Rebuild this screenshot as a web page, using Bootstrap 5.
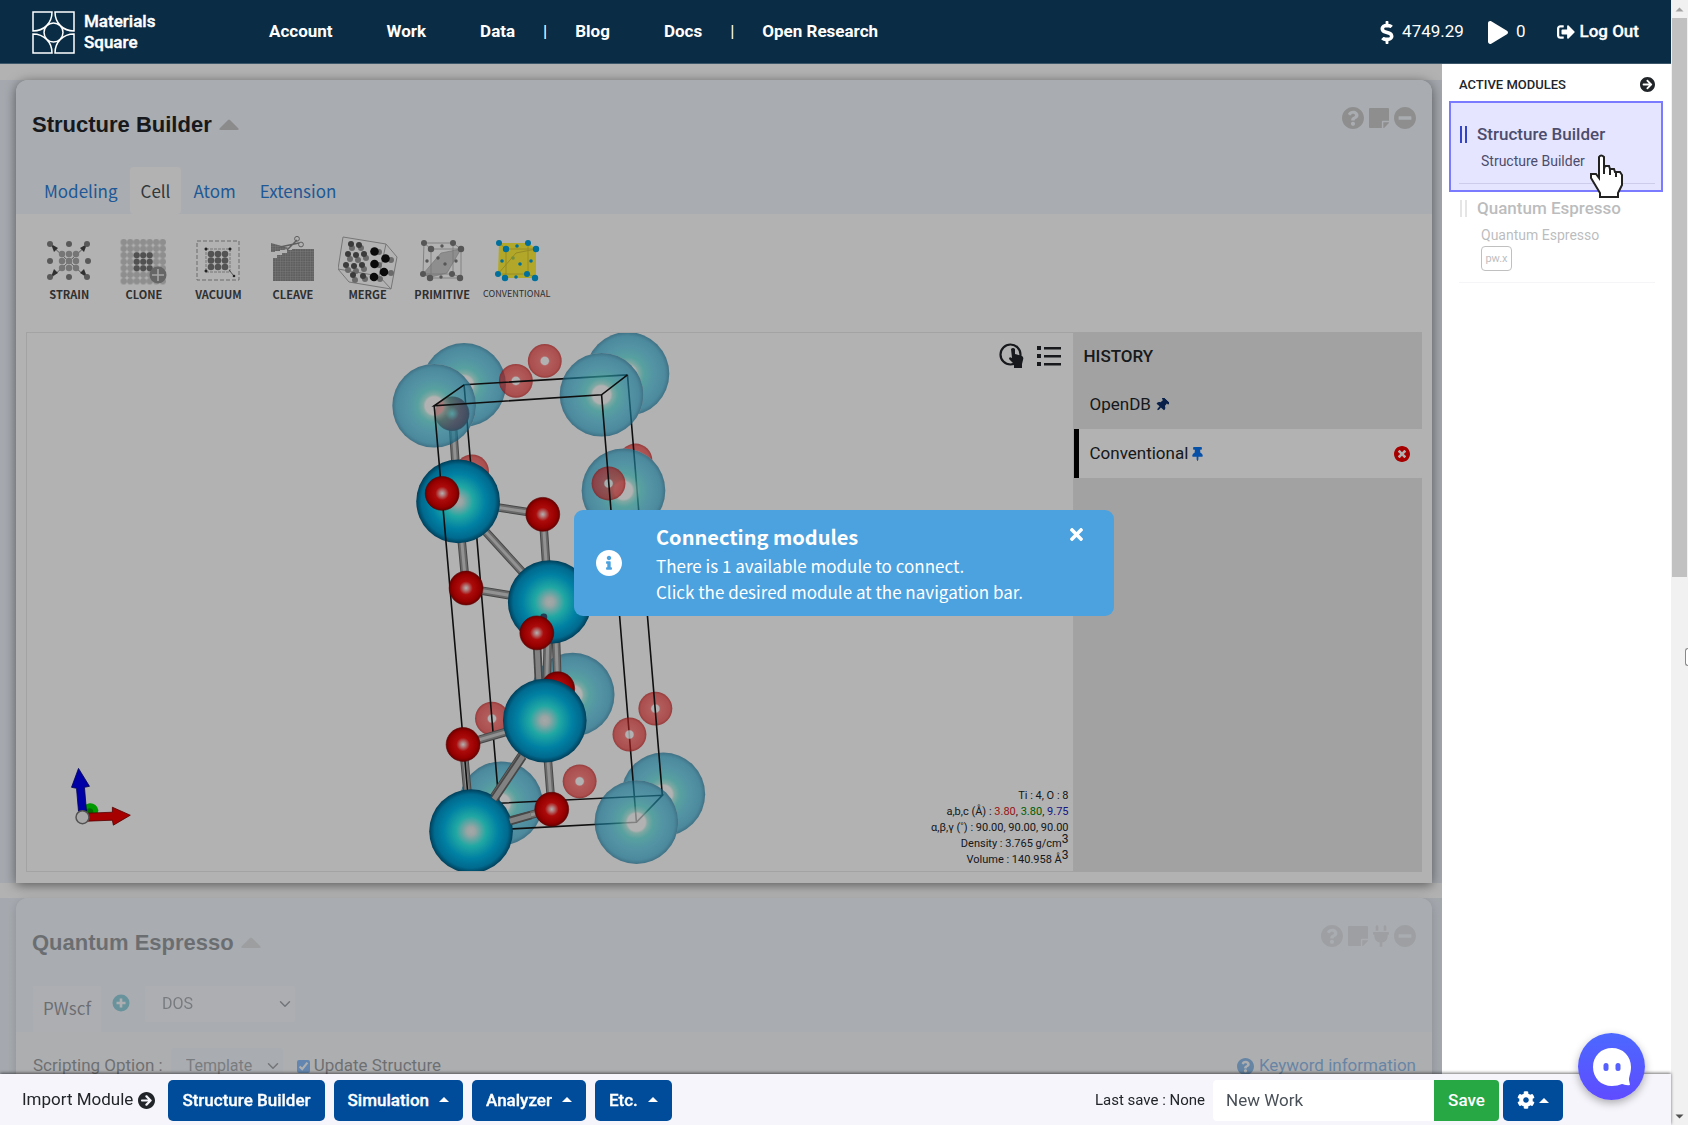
<!DOCTYPE html>
<html lang="en">
<head>
<meta charset="utf-8">
<meta name="viewport" content="width=device-width, initial-scale=1">
<title>Materials Square</title>
<link href="https://cdn.jsdelivr.net/npm/bootstrap@5.3.0/dist/css/bootstrap.min.css" rel="stylesheet">
<style>
  :root { --navy:#0a2c44; --action:#004c9b; --soft:#f3f7fd; --humanist:"Noto Sans CJK KR","Noto Sans",sans-serif; }
  body { font-family:Roboto,"Liberation Sans",sans-serif; font-size:17px; color:#212529; height:100vh; overflow:hidden; }
  svg { display:block; flex:none; }
  .ico { fill:currentColor; }
  .min-0 { min-width:0; min-height:0; }

  /* top bar */
  .topbar { background:var(--navy); color:#fff; height:64px; flex:none; border-bottom:1px solid #3c566a; padding:1px 32px 0; }
  .topbar a { color:#fff; text-decoration:none; }
  .brand { font-size:17px; line-height:21px; font-weight:500; -webkit-text-stroke:.4px #fff; width:210px; gap:9px; }
  .mainnav { font-weight:700; }
  .mainnav a { padding:0 27px; }
  .mainnav span { font-weight:400; padding:0 1px; }
  .logout { font-weight:500; -webkit-text-stroke:.3px #fff; gap:4px; }

  /* workspace */
  .workspace { overflow:hidden; padding-top:16px; background:#fff; }
  .shade { background:rgba(0,0,0,.3); z-index:5; pointer-events:none; }
  .band { background:linear-gradient(90deg,#edf3fb,#f3f7fc 50%,#e9eff7); padding:0 10px 0 16px; margin-bottom:15px; flex:none; }
  .modbox { border-radius:12px 12px 0 0; background:#fff; box-shadow:0 2px 12px rgba(0,0,0,.5); }
  .modbox.dim { box-shadow:0 2px 10px rgba(0,0,0,.15); background:#f8fafd; height:240px; }
  .modhead { background:var(--soft); border-radius:12px 12px 0 0; height:134px; padding-left:16px; }
  .modhead .toprow { padding-right:16px; }
  .modtitle { font-family:"Liberation Sans",Arial,sans-serif; font-size:22px; line-height:26px; font-weight:700; margin:32px 0 0; gap:7px; }
  .headtools { color:#ccc; gap:5px; margin-top:27px; }
  .headtools button, .plain { border:0; background:none; padding:0; color:inherit; }
  .dim .modhead > *, .dim .optrow { opacity:.42; }
  .tabstrip { font-family:var(--humanist); font-size:17px; margin:0; }
  .tabstrip .nav-link { padding:0 12px; height:47px; line-height:47px; border:0; border-radius:4px; color:#2d7fd9; }
  .tabstrip .nav-link.active { background:#fff; color:#495057; padding:0 11px; }

  .tools { display:grid; grid-template-columns:repeat(7,minmax(0,1fr)); width:522px; max-width:100%; margin-left:16px; padding-top:22px; height:118px; align-items:start; }
  .tools button { border:0; background:none; padding:0; font:700 11px/14px var(--humanist); color:#444; }
  .tools button svg { margin:0 auto -3px; }
  .tools button.slim { font-weight:400; font-size:9px; }
  .stage { padding:0 10px 11px; height:551px; }
  .viewer { flex:3 1 0; border:1px solid #eaeaea; background:#fff; position:relative; }
  .history { flex:1 1 0; background:#e9e9e9; }
  .viewtools { position:absolute; top:10px; right:12px; gap:13px; }
  .cellinfo { position:absolute; right:4px; bottom:3px; font-size:11px; line-height:16px; text-align:right; }
  .cellinfo sup { font-size:12px; line-height:0; top:-4px; }
  .history h2 { font-size:17px; font-weight:500; line-height:48px; margin:0; padding-left:10px; }
  .step { height:49px; padding:0 12px 0 16px; gap:4px; }
  .step.now { background:#fff; border-left:5px solid #000; padding-left:11px; }

  .scftab { font-family:var(--humanist); font-size:17px; background:#fff; width:68px; height:46px; text-align:center; line-height:44px; margin-left:1px; }
  .adder { margin:8px 15px 0 11px; }
  .picker { border:0; border-radius:3px; background-color:#fff; font-size:16px; padding:0 28px 0 17px; height:36px; width:150px; background-position:right 2px center; color:#495057; }
  .optrow { padding:16px 16px 0 17px; }
  .optrow .picker { background-color:#eef4fb; width:112px; font-size:16px; padding-left:15px; }
  .optrow input[type=checkbox] { width:13px; height:13px; margin:0 4px 0 14px; }
  .keyinfo { color:#0a6fd8; text-decoration:none; gap:5px; }

  /* module list */
  .modlist { width:229px; background:#fff; padding:0 8px 0 7px; z-index:6; }
  .modlist h2 { font-size:13px; line-height:33px; font-weight:500; margin:0; padding:4px 8px 0 10px; }
  .entry { display:block; border:2px solid transparent; color:#212529; text-decoration:none; height:91px; padding:19px 6px 0 8px; }
  .entry.on { border-color:#7b7bff; background:#e5e5ff; color:#4c4c6c; }
  .entry.off { opacity:.3; padding-top:2px; height:94px; }
  .entry .name { font-size:17px; line-height:24px; font-weight:500; gap:10px; }
  .entry .sub { font-size:14px; line-height:22px; padding:4px 0 0 22px; }
  .bars { width:7px; height:17px; border:solid #3344c4; border-width:0 2px; margin-left:1px; }
  .off .bars { border-color:#aaa; }
  .entry hr { margin:11px 0 0; border-color:#8888b0; }
  .chip { display:block; width:31px; text-align:center; border:1px solid #333; border-radius:4px; font-size:11px; line-height:23px; margin-left:22px; }
  .pointer { position:absolute; left:147px; top:90px; z-index:8; }

  /* bottom bar */
  .bottombar { background:#f5f5fb; height:51px; flex:none; padding:1px 108px 0 22px; box-shadow:0 -1px 3px rgba(0,0,0,.55); z-index:7; position:relative; }
  .bottombar .btn { height:41px; font-size:17px; line-height:26px; padding:6px 14px; border-radius:5px; border:0; }
  .btn-act { background:var(--action); color:#fff; font-weight:500; -webkit-text-stroke:.3px #fff; }
  .btn-act:hover { background:#003f80; color:#fff; }
  .btn-act.dropdown-toggle::after { margin-left:10px; }
  .importer { gap:5px; margin-right:13px; }
  .launch { gap:9px; }
  .bottombar .btn-gear { width:60px; }
  .btn-gear.dropdown-toggle::after { margin-left:4px; }
  .bottombar .btn-save { background:#28a745; color:#fff; border-radius:0 4px 4px 0; width:65px; font-weight:500; }
  .bottombar input { width:221px; height:41px; border:0; border-radius:4px 0 0 4px; font-size:17px; padding:0 13px; color:#495057; }
  .savebox { font-size:15px; }
  .chat { position:absolute; right:26px; top:-41px; width:67px; height:67px; border-radius:50%; border:0; padding:0; background:linear-gradient(#4c68ff,#5f4cff); box-shadow:0 3px 8px rgba(0,0,0,.3); }
  .chat svg { margin:auto; }

  /* message */
  .message { position:fixed; left:50%; top:50%; transform:translate(-50%,-50%); z-index:20; width:540px; height:106px; background:#4ca2de; color:#fff; border-radius:9px; font:17px/26px var(--humanist); padding:0 31px 0 22px; }
  .message strong { font-size:20px; display:block; line-height:30px; margin-bottom:1px; }
  .message .copy { margin-left:34px; margin-top:12px; }
  .message button { margin-top:18px; }

  /* scroll rail */
  .rail { width:17px; background:#f1f1f1; }
  .rail .thumb { width:15px; background:#c1c1c1; flex:0 0 559px; }
  .rail .grip { position:fixed; right:0; top:648px; width:3px; height:18px; border:1px solid #888; border-right:0; background:#fff; border-radius:3px 0 0 3px; }
</style>
<script src="https://cdn.jsdelivr.net/npm/bootstrap@5.3.0/dist/js/bootstrap.bundle.min.js"></script>
</head>
<body class="d-flex">

<svg width="0" height="0" class="position-absolute" aria-hidden="true">
  <defs>
    <symbol id="i-help" viewBox="8 8 496 496"><path d="M504 256c0 136.997-111.043 248-248 248S8 392.997 8 256C8 119.083 119.043 8 256 8s248 111.083 248 248zM262.655 90c-54.497 0-89.255 22.957-116.549 63.758-3.536 5.286-2.353 12.415 2.715 16.258l34.699 26.310c5.205 3.947 12.621 3.008 16.665-2.122 17.864-22.658 30.113-35.797 57.303-35.797 20.429 0 45.698 13.148 45.698 32.958 0 14.976-12.363 22.667-32.534 33.976C247.128 238.528 216 254.941 216 296v4c0 6.627 5.373 12 12 12h56c6.627 0 12-5.373 12-12v-1.333c0-28.462 83.186-29.647 83.186-106.667 0-58.002-60.165-102-116.531-102zM256 338c-25.365 0-46 20.635-46 46 0 25.364 20.635 46 46 46s46-20.636 46-46c0-25.365-20.635-46-46-46z"/></symbol>
    <symbol id="i-note" viewBox="0 32 448 448"><path d="M312 320h136V56c0-13.300-10.700-24-24-24H24C10.700 32 0 42.700 0 56v400c0 13.300 10.700 24 24 24h264V344c0-13.200 10.800-24 24-24zm129 55l-98 98c-4.500 4.500-10.600 7-17 7h-6V352h128v6.100c0 6.300-2.500 12.400-7 16.900z"/></symbol>
    <symbol id="i-minus" viewBox="8 8 496 496"><path d="M256 8C119 8 8 119 8 256s111 248 248 248 248-111 248-248S393 8 256 8zM124 296c-6.600 0-12-5.400-12-12v-56c0-6.600 5.400-12 12-12h264c6.600 0 12 5.400 12 12v56c0 6.600-5.400 12-12 12H124z"/></symbol>
    <symbol id="i-plug" viewBox="0 0 384 512"><path d="M320,32a32,32,0,0,0-64,0v96h64Zm48,128H16A16,16,0,0,0,0,176v32a16,16,0,0,0,16,16H32v32A160.070,160.070,0,0,0,160,412.800V512h64V412.800A160.070,160.070,0,0,0,352,256V224h16a16,16,0,0,0,16-16V176A16,16,0,0,0,368,160ZM128,32a32,32,0,0,0-64,0v96h64Z"/></symbol>
    <symbol id="i-info" viewBox="8 8 496 496"><path d="M256 8C119.043 8 8 119.083 8 256c0 136.997 111.043 248 248 248s248-111.003 248-248C504 119.083 392.957 8 256 8zm0 110c23.196 0 42 18.804 42 42s-18.804 42-42 42-42-18.804-42-42 18.804-42 42-42zm56 254c0 6.627-5.373 12-12 12h-88c-6.627 0-12-5.373-12-12v-24c0-6.627 5.373-12 12-12h12v-64h-12c-6.627 0-12-5.373-12-12v-24c0-6.627 5.373-12 12-12h64c6.627 0 12 5.373 12 12v100h12c6.627 0 12 5.373 12 12v24z"/></symbol>
    <symbol id="i-go" viewBox="8 8 496 496"><path d="M256 8c137 0 248 111 248 248S393 504 256 504 8 393 8 256 119 8 256 8zm-28.900 143.600l75.500 72.400H120c-13.300 0-24 10.700-24 24v16c0 13.300 10.700 24 24 24h182.600l-75.500 72.400c-9.700 9.300-9.900 24.800-.4 34.300l11 10.900c9.400 9.400 24.600 9.400 33.900 0L404.300 273c9.400-9.400 9.400-24.600 0-33.900L271.600 106.300c-9.400-9.400-24.600-9.400-33.900 0l-11 10.900c-9.500 9.600-9.300 25.100.4 34.400z"/></symbol>
    <symbol id="i-xcircle" viewBox="8 8 496 496"><path d="M256 8C119 8 8 119 8 256s111 248 248 248 248-111 248-248S393 8 256 8zm121.600 313.100c4.700 4.700 4.700 12.300 0 17L338 377.600c-4.700 4.700-12.300 4.700-17 0L256 312l-65.100 65.600c-4.700 4.700-12.300 4.700-17 0L134.400 338c-4.700-4.700-4.700-12.300 0-17l65.600-65-65.600-65.100c-4.700-4.700-4.700-12.300 0-17l39.600-39.600c4.700-4.700 12.300-4.700 17 0l65 65.700 65.100-65.600c4.700-4.700 12.300-4.700 17 0l39.600 39.600c4.700 4.700 4.700 12.300 0 17L312 256l65.600 65.100z"/></symbol>
    <symbol id="i-pin" viewBox="0 0 384 512"><path d="M298.028 214.267L285.793 96H328c13.255 0 24-10.745 24-24V24c0-13.255-10.745-24-24-24H56C42.745 0 32 10.745 32 24v48c0 13.255 10.745 24 24 24h42.207L85.972 214.267C37.465 236.820 0 277.261 0 328c0 13.255 10.745 24 24 24h136v104.007c0 1.242.289 2.467.845 3.578l24 48c2.941 5.882 11.364 5.893 14.311 0l24-48a8.008 8.008 0 0 0 .845-3.578V352h136c13.255 0 24-10.745 24-24-.001-51.183-37.983-91.420-85.973-113.733z"/></symbol>
    <symbol id="i-x" viewBox="0 80 352 352"><path d="M242.720 256l100.070-100.070c12.280-12.280 12.280-32.190 0-44.480l-22.240-22.240c-12.280-12.280-32.190-12.280-44.480 0L176 189.280 75.930 89.210c-12.280-12.280-32.190-12.280-44.480 0L9.210 111.450c-12.280 12.280-12.280 32.190 0 44.480L109.280 256 9.210 356.070c-12.280 12.280-12.280 32.190 0 44.480l22.240 22.240c12.280 12.280 32.200 12.280 44.480 0L176 322.720l100.070 100.070c12.280 12.280 32.200 12.280 44.480 0l22.240-22.240c12.280-12.280 12.280-32.190 0-44.480L242.720 256z"/></symbol>

    <radialGradient id="ti"><stop offset="0" stop-color="#ecf0f0"/><stop offset=".1" stop-color="#dcebea"/><stop offset=".36" stop-color="#2ef0ea"/><stop offset=".66" stop-color="#00b8ea"/><stop offset=".88" stop-color="#0098cc"/><stop offset="1" stop-color="#005a80"/></radialGradient>
    <radialGradient id="ox"><stop offset="0" stop-color="#fff"/><stop offset=".15" stop-color="#ffaaaa"/><stop offset=".4" stop-color="#f61010"/><stop offset=".8" stop-color="#d80000"/><stop offset="1" stop-color="#900"/></radialGradient>
    <radialGradient id="tif"><stop offset="0" stop-color="#fff" stop-opacity=".7"/><stop offset=".21" stop-color="#fff" stop-opacity=".7"/><stop offset=".26" stop-color="#a9efe4" stop-opacity=".8"/><stop offset=".4" stop-color="#45dcda" stop-opacity=".7"/><stop offset=".65" stop-color="#2cbbe0" stop-opacity=".64"/><stop offset=".9" stop-color="#22a6d2" stop-opacity=".66"/><stop offset="1" stop-color="#1c7ea4" stop-opacity=".72"/></radialGradient>
    <radialGradient id="oxf"><stop offset="0" stop-color="#fff" stop-opacity=".85"/><stop offset=".22" stop-color="#fff" stop-opacity=".85"/><stop offset=".3" stop-color="#f33" stop-opacity=".6"/><stop offset=".85" stop-color="#f02828" stop-opacity=".66"/><stop offset="1" stop-color="#c81e1e" stop-opacity=".75"/></radialGradient>
    <g id="Ti"><circle r="42" fill="url(#ti)"/></g>
    <g id="Ox"><circle r="17" fill="url(#ox)" stroke="#800" stroke-width=".6"/></g>
    <g id="Tif"><circle r="42" fill="url(#tif)"/></g>
    <g id="Oxf"><circle r="17" fill="url(#oxf)"/></g>
    <pattern id="dots" width="6.5" height="6.500" patternUnits="userSpaceOnUse" x="4.500" y="3"><circle cx="3.250" cy="3.250" r="3.200" fill="#ccc"/></pattern>
    <pattern id="mesh" width="2.500" height="2.500" patternUnits="userSpaceOnUse"><rect width="2.500" height="2.500" fill="#888"/><path d="M0 0H2.500M0 0V2.500" stroke="#b4b4b4" stroke-width=".8"/></pattern>
  </defs>
</svg>

<div class="d-flex flex-column flex-grow-1 min-0">

  <header class="topbar d-flex align-items-center">
    <a href="#" class="brand d-flex align-items-center">
      <svg width="43" height="43" viewBox="0 0 43 43" fill="none" stroke="#fff" stroke-width="1.500">
        <path d="M1 1h19c0 11-8 19-19 19zM42 1H23c0 11 8 19 19 19zM1 42h19c0-11-8-19-19-19zM42 42H23c0-11 8-19 19-19z"/>
        <circle cx="21.500" cy="21.500" r="9.500"/>
      </svg>
      <span>Materials<br>Square</span>
    </a>
    <nav class="mainnav d-flex align-items-center">
      <a href="#">Account</a><a href="#">Work</a><a href="#">Data</a><span>|</span><a href="#">Blog</a><a href="#">Docs</a><span>|</span><a href="#">Open Research</a>
    </nav>
    <div class="d-flex align-items-center ms-auto">
      <svg class="ico me-2" width="14" height="23" viewBox="0 0 288 512"><path d="M209.200 233.400l-108-31.600C88.700 198.200 80 186.500 80 173.500c0-16.300 13.200-29.500 29.500-29.500h66.300c12.200 0 24.200 3.700 34.200 10.500 6.100 4.100 14.300 3.100 19.500-2l34.800-34c7.100-6.900 6.100-18.400-1.800-24.500C238 74.800 207.400 64.100 176 64V16c0-8.800-7.200-16-16-16h-32c-8.800 0-16 7.200-16 16v48h-2.500C45.800 64-5.400 118.700.5 183.600c4.200 46.100 39.400 83.600 83.800 96.600l102.500 30c12.500 3.700 21.200 15.300 21.200 28.300 0 16.300-13.200 29.500-29.500 29.500h-66.300C100 368 88 364.300 78 357.500c-6.100-4.100-14.300-3.100-19.500 2l-34.800 34c-7.100 6.900-6.100 18.400 1.800 24.500 24.500 19.200 55.100 29.900 86.500 30v48c0 8.800 7.200 16 16 16h32c8.800 0 16-7.200 16-16v-48.200c46.600-.9 90.300-28.600 105.700-72.700 21.500-61.600-14.600-124.800-72.500-141.700z"/></svg>
      <span class="me-4">4749.29</span>
      <svg class="ico me-2" width="20" height="23" viewBox="0 0 448 512"><path d="M424.400 214.700L72.400 6.600C43.800-10.300 0 6.100 0 47.900V464c0 37.500 40.700 60.100 72.400 41.300l352-208c31.400-18.500 31.500-64.100 0-82.600z"/></svg>
      <span>0</span>
      <a href="#" class="logout d-flex align-items-center ms-4 ps-2">
        <svg class="ico" width="18" height="18" viewBox="0 0 512 512"><path d="M497 273L329 441c-15 15-41 4.500-41-17v-96H152c-13.300 0-24-10.700-24-24v-96c0-13.300 10.700-24 24-24h136V88c0-21.400 25.900-32 41-17l168 168c9.300 9.400 9.300 24.600 0 34zM192 436v-40c0-6.600-5.400-12-12-12H96c-17.700 0-32-14.300-32-32V160c0-17.700 14.300-32 32-32h84c6.600 0 12-5.400 12-12V76c0-6.600-5.400-12-12-12H96c-53 0-96 43-96 96v192c0 53 43 96 96 96h84c6.600 0 12-5.400 12-12z"/></svg>
        Log Out</a>
    </div>
  </header>

  <div class="d-flex flex-grow-1 min-0 position-relative">
    <main class="workspace flex-grow-1 min-0 position-relative d-flex flex-column">
      <div class="shade position-absolute top-0 bottom-0 start-0 end-0"></div>

      <div class="band">
        <section class="modbox">
          <div class="modhead d-flex flex-column justify-content-between">
            <div class="toprow d-flex justify-content-between align-items-start">
              <h1 class="modtitle d-flex align-items-center">Structure Builder
                <svg width="20" height="12" viewBox="0 0 20 12"><path d="M9 1q1-1 2 0l8 8q2 2-1 2H2q-3 0-1-2z" fill="#c8c8c8"/></svg></h1>
              <div class="headtools d-flex">
                <button type="button" aria-label="Help"><svg class="ico" width="22" height="22"><use href="#i-help"/></svg></button>
                <button type="button" aria-label="Note"><svg class="ico" width="20" height="20"><use href="#i-note"/></svg></button>
                <button type="button" aria-label="Minimize"><svg class="ico" width="22" height="22"><use href="#i-minus"/></svg></button>
              </div>
            </div>
            <ul class="nav tabstrip">
              <li class="nav-item"><a class="nav-link" href="#">Modeling</a></li>
              <li class="nav-item"><a class="nav-link active" href="#">Cell</a></li>
              <li class="nav-item"><a class="nav-link" href="#">Atom</a></li>
              <li class="nav-item"><a class="nav-link" href="#">Extension</a></li>
            </ul>
          </div>

          <div class="tools">
            <button type="button"><svg width="56" height="54" viewBox="0 0 56 54">
              <path d="M10 9l36 33M46 9L10 42" stroke="#666" stroke-width=".8"/>
              <path d="M10 8l7 4-4 4zM46 8l-7 4 4 4zM10 41l7-4-4-4zM46 41l-7-4 4-4z" fill="#444"/>
              <g fill="#808080"><circle cx="9" cy="8" r="3"/><circle cx="28" cy="8" r="3"/><circle cx="46" cy="8" r="3"/><circle cx="9" cy="25" r="3"/><circle cx="47" cy="25" r="3"/><circle cx="9" cy="41" r="3"/><circle cx="28" cy="41" r="3"/><circle cx="46" cy="41" r="3"/></g>
              <g fill="#aaa"><circle cx="21" cy="18" r="3.200"/><circle cx="28" cy="18" r="3.200"/><circle cx="35" cy="18" r="3.200"/><circle cx="21" cy="25" r="3.200"/><circle cx="28" cy="25" r="3.200"/><circle cx="35" cy="25" r="3.200"/><circle cx="21" cy="32" r="3.200"/><circle cx="28" cy="32" r="3.200"/><circle cx="35" cy="32" r="3.200"/></g>
            </svg>STRAIN</button>
            <button type="button"><svg width="56" height="54" viewBox="0 0 56 54">
              <rect x="4.500" y="3" width="45.500" height="45.500" fill="url(#dots)"/>
              <g fill="#757575"><circle cx="20.700" cy="19.200" r="3"/><circle cx="27.200" cy="19.200" r="3"/><circle cx="33.700" cy="19.200" r="3"/><circle cx="20.700" cy="25.700" r="3"/><circle cx="27.200" cy="25.700" r="3"/><circle cx="33.700" cy="25.700" r="3"/><circle cx="20.700" cy="32.200" r="3"/><circle cx="27.200" cy="32.200" r="3"/><circle cx="33.700" cy="32.200" r="3"/></g>
              <circle cx="42" cy="39" r="8.500" fill="#929292"/><path d="M42 33v12M36 39h12" stroke="#eee" stroke-width="1.600"/>
            </svg>CLONE</button>
            <button type="button"><svg width="56" height="54" viewBox="0 0 56 54">
              <rect x="7" y="5" width="42" height="39" fill="none" stroke="#999" stroke-dasharray="4 2"/>
              <rect x="16" y="13" width="24" height="23" fill="none" stroke="#888" stroke-width=".7" stroke-dasharray="3 1"/>
              <g fill="#787878"><circle cx="21" cy="18" r="3.300"/><circle cx="28" cy="18" r="3.300"/><circle cx="35" cy="18" r="3.300"/><circle cx="21" cy="24.500" r="3.300"/><circle cx="28" cy="24.500" r="3.300"/><circle cx="35" cy="24.500" r="3.300"/><circle cx="21" cy="31" r="3.300"/><circle cx="28" cy="31" r="3.300"/><circle cx="35" cy="31" r="3.300"/></g>
              <path d="M15 12h2v2h-2zM39 12h2v2h-2zM15 34h2v2h-2zM39 34l5 6" fill="#333" stroke="#333" stroke-width=".7"/><circle cx="44" cy="40" r="1.300" fill="#333"/>
            </svg>VACUUM</button>
            <button type="button"><svg width="56" height="54" viewBox="0 0 56 54">
              <path d="M8 45V22h4v-3h5v-2h5v-3h5v-1h22v32z" fill="url(#mesh)"/>
              <path d="M6 7l18 5-5 2h-4v1h-5v1H6z" fill="url(#mesh)"/>
              <path d="M22 14L32 4M15 11l19-4" stroke="#888" stroke-width="1.500"/><circle cx="32" cy="2.800" r="2.400" fill="none" stroke="#888"/><circle cx="36" cy="8.500" r="2.400" fill="none" stroke="#888"/>
            </svg>CLEAVE</button>
            <button type="button"><svg width="60" height="54" viewBox="-1 0 60 54">
              <path d="M4 1l43 7 11 13-6 32-42-7L-1 33zM47 8L40 40 52 53M40 40L-1 33" fill="none" stroke="#aaa"/>
              <g fill="#999"><circle cx="13" cy="12" r="3"/><circle cx="22" cy="12" r="3"/><circle cx="11" cy="23" r="3"/><circle cx="19" cy="24" r="3"/><circle cx="27" cy="22" r="3"/><circle cx="9" cy="34" r="3"/><circle cx="17" cy="35" r="3"/><circle cx="25" cy="33" r="3"/><circle cx="16" cy="44" r="3"/><circle cx="26" cy="43" r="3"/><circle cx="40" cy="16" r="3"/><circle cx="40" cy="29" r="3"/><circle cx="41" cy="43" r="3"/><circle cx="52" cy="24" r="3"/><circle cx="52" cy="37" r="3"/></g>
              <g fill="#555"><circle cx="12" cy="8" r="3"/><circle cx="20" cy="9" r="3"/><circle cx="9" cy="18" r="3"/><circle cx="17" cy="19" r="3"/><circle cx="25" cy="18" r="3"/><circle cx="7" cy="29" r="3"/><circle cx="15" cy="30" r="3"/><circle cx="23" cy="29" r="3"/><circle cx="14" cy="39" r="3"/><circle cx="24" cy="40" r="3"/></g>
              <g fill="#111"><circle cx="35.500" cy="15.500" r="4.300"/><circle cx="35.500" cy="28" r="4.300"/><circle cx="35" cy="41" r="4.300"/><circle cx="46.500" cy="22.500" r="4.300"/><circle cx="45" cy="36" r="4.300"/></g>
            </svg>MERGE</button>
            <button type="button"><svg width="56" height="54" viewBox="0 0 56 54">
              <path d="M10 7h29l8 6v29H17l-8-4zM10 7l7 6h30M17 13v29M39 7v31M9 38h30l8 4" fill="none" stroke="#bbb"/>
              <path d="M9 38L27 17l20-4-14 24-16 4z" fill="#aaa" fill-opacity=".6" stroke="#999" stroke-width=".5"/>
              <g fill="#7b7b7b"><circle cx="10" cy="7" r="3"/><circle cx="39" cy="7" r="3"/><circle cx="17" cy="13" r="3.200"/><circle cx="47" cy="13" r="3.200"/><circle cx="9" cy="38" r="3"/><circle cx="38" cy="38" r="3"/><circle cx="16" cy="42" r="3.200"/><circle cx="46" cy="42" r="3.200"/><circle cx="28" cy="10" r="1.700"/><circle cx="13" cy="25" r="1.700"/><circle cx="24" cy="22" r="1.700"/><circle cx="31" cy="28" r="1.700"/><circle cx="42" cy="25" r="1.700"/><circle cx="27" cy="41" r="1.700"/></g>
            </svg>PRIMITIVE</button>
            <button type="button" class="slim"><svg width="56" height="54" viewBox="0 0 56 54">
              <path d="M10 7h29l8 6v29H17l-8-4z" fill="#ffef3c"/>
              <path d="M10 7l7 6h30M17 13v29M39 7v31M9 38h30l8 4M9 38L27 17l20-4" fill="none" stroke="#d8c734"/>
              <g fill="#00a0e0"><circle cx="10" cy="7" r="3"/><circle cx="39" cy="7" r="3"/><circle cx="17" cy="13" r="3.200"/><circle cx="47" cy="13" r="3.200"/><circle cx="9" cy="38" r="3"/><circle cx="38" cy="38" r="3"/><circle cx="16" cy="42" r="3.200"/><circle cx="46" cy="42" r="3.200"/><circle cx="28" cy="10" r="1.800"/><circle cx="13" cy="25" r="1.800"/><circle cx="24" cy="22" r="1.800" fill="#a5cc55"/><circle cx="31" cy="28" r="1.800"/><circle cx="42" cy="25" r="1.800"/><circle cx="27" cy="41" r="1.800"/></g>
            </svg>CONVENTIONAL</button>
          </div>

          <div class="stage d-flex">
            <div class="viewer">
              <svg width="100%" height="100%" viewBox="27 332 1046 540">
                <g>
                  <use href="#Tif" x="464" y="384"/><use href="#Tif" x="628" y="373"/>
                  <use href="#Oxf" x="516" y="380"/><use href="#Oxf" x="545" y="360"/>
                  <use href="#Oxf" x="472" y="471"/><use href="#Oxf" x="636" y="460"/>
                  <use href="#Tif" x="573" y="695"/><use href="#Tif" x="501" y="804"/><use href="#Tif" x="664" y="795"/>
                  <use href="#Oxf" x="492" y="719"/><use href="#Oxf" x="656" y="709"/><use href="#Oxf" x="580" y="782"/>
                </g>
                <!-- front ghosts hide the ghosts behind them, but not the cell edges -->
                <g fill="#fff"><circle cx="434" cy="405" r="42"/><circle cx="602" cy="394" r="42"/><circle cx="624" cy="490" r="42"/><circle cx="637" cy="823" r="42"/></g>
                <path d="M464 384L628 374M464 384L499 804M628 374L663 796M499 804L663 796 637 823 471 832" fill="none" stroke="#161616" stroke-width="1.600"/>
                <g stroke="#666" stroke-width="8.500"><path id="bonds" d="M452 413L458 501M458 501L543 514M458 501L550 602M458 501L466 588M466 588L550 602M543 514L549 602M555 602L558 689M549 602L546 721M545 721L463 745M545 721L552 810M545 721L471 832M463 745L471 832M471 832L552 810"/></g>
                <use href="#bonds" stroke="#999" stroke-width="6.500"/><use href="#bonds" stroke="#d2d2d2" stroke-width="3"/>
                <use href="#Ox" x="452" y="413"/>
                <use href="#Tif" x="434" y="405"/><use href="#Tif" x="602" y="394"/><use href="#Tif" x="624" y="490"/>
                <path d="M464 384L434 405 602 394 628 374" fill="none" stroke="#161616" stroke-width="1.600"/>
                <use href="#Oxf" x="609" y="483"/>
                <use href="#Ti" x="458" y="501"/>
                <use href="#Ox" x="558" y="689"/>
                <path d="M434 405L471 832M602 394L637 823" stroke="#161616" stroke-width="1.600"/>
                <use href="#Ti" x="550" y="602"/>
                <use href="#Ox" x="442" y="493"/><use href="#Ox" x="543" y="514"/><use href="#Ox" x="466" y="588"/>
                <path d="M537 640L541 721" stroke="#666" stroke-width="8.500"/><path d="M537 640L541 721" stroke="#bbb" stroke-width="5"/>
                <circle cx="544" cy="617" r="3.500" fill="#357"/>
                <use href="#Ox" x="537" y="633"/>
                <use href="#Ti" x="545" y="721"/>
                <use href="#Oxf" x="630" y="735"/><use href="#Tif" x="637" y="823"/>
                <use href="#Ti" x="471" y="832"/>
                <path d="M523 757L494 800M531 816L510 822" stroke="#666" stroke-width="8.500"/><path d="M523 757L494 800M531 816L510 822" stroke="#bbb" stroke-width="5"/>
                <use href="#Ox" x="463" y="745"/><use href="#Ox" x="552" y="810"/>
                <path d="M81 813a8 8 0 0 1 16-2l-1 4H84z" fill="#00dc00"/><circle cx="88" cy="813" r="4" fill="#00a000"/>
                <path d="M77 769l11 18-5 1 2 24h-8l-2-23-5-1z" fill="#0000f0" stroke="#000078" stroke-width=".8"/>
                <path d="M129 816l-18-8v5l-25 1v8l25-1 1 5z" fill="#f00000" stroke="#780000" stroke-width=".8"/>
                <circle cx="81" cy="818" r="6.500" fill="#f2f2f2" stroke="#777" stroke-width="1.500"/>
              </svg>
              <div class="viewtools d-flex align-items-center">
                <button type="button" class="plain" aria-label="Rotate"><svg width="25" height="26" viewBox="0 0 25 26"><circle cx="11.500" cy="11.500" r="10" fill="none" stroke="#212529" stroke-width="2.200"/><path d="M12 6q2-2 4 0v5l7 2q2 1 1 4l-1 4v4h-8v-4l-5-5q0-3 3-1z" fill="#212529"/></svg></button>
                <button type="button" class="plain" aria-label="List"><svg width="24" height="20" viewBox="0 0 24 20" fill="#212529"><path d="M0 0h4v4H0zM0 8h4v4H0zM0 16h4v4H0zM7 1h17v2.500H7zM7 9h17v2.500H7zM7 17h17v2.500H7z"/></svg></button>
              </div>
              <div class="cellinfo">
                Ti : 4, O : 8<br>
                a,b,c (Å) : <span style="color:#d22">3.80</span>, <span style="color:#080">3.80</span>, <span style="color:#22b">9.75</span><br>
                α,β,γ (˚) : 90.00, 90.00, 90.00<br>
                Density : 3.765 g/cm<sup>3</sup><br>
                Volume : 140.958 Å<sup>3</sup>
              </div>
            </div>
            <aside class="history">
              <h2>HISTORY</h2>
              <div class="step d-flex align-items-center">OpenDB <svg width="14" height="14" viewBox="-64 0 512 512" fill="#0c2f6b"><g transform="rotate(42 192 256)"><use href="#i-pin" width="384" height="512"/></g></svg></div>
              <div class="step now d-flex align-items-center">Conventional <svg class="ico" width="11" height="14" style="color:#0a74f0"><use href="#i-pin"/></svg>
                <button type="button" class="plain ms-auto" aria-label="Remove"><svg width="16" height="16" fill="#f00000"><use href="#i-xcircle"/></svg></button></div>
            </aside>
          </div>
        </section>
      </div>

      <div class="band">
        <section class="modbox dim">
          <div class="modhead d-flex flex-column justify-content-between">
            <div class="toprow d-flex justify-content-between align-items-start">
              <h2 class="modtitle d-flex align-items-center">Quantum Espresso
                <svg width="20" height="12" viewBox="0 0 20 12"><path d="M9 1q1-1 2 0l8 8q2 2-1 2H2q-3 0-1-2z" fill="#c8c8c8"/></svg></h2>
              <div class="headtools d-flex">
                <button type="button" aria-label="Help"><svg class="ico" width="22" height="22"><use href="#i-help"/></svg></button>
                <button type="button" aria-label="Note"><svg class="ico" width="20" height="20"><use href="#i-note"/></svg></button>
                <button type="button" aria-label="Connect"><svg class="ico" width="16" height="22"><use href="#i-plug"/></svg></button>
                <button type="button" aria-label="Minimize"><svg class="ico" width="22" height="22"><use href="#i-minus"/></svg></button>
              </div>
            </div>
            <div class="d-flex align-items-start">
              <div class="scftab">PWscf</div>
              <button type="button" class="plain adder" aria-label="Add"><svg width="18" height="18" viewBox="0 0 18 18"><circle cx="9" cy="9" r="8.500" fill="#17a2b8"/><path d="M9 4.500v9M4.500 9h9" stroke="#fff" stroke-width="2.600"/></svg></button>
              <select class="form-select picker" aria-label="Calculation"><option>DOS</option></select>
            </div>
          </div>
          <div class="optrow d-flex align-items-center">
            <label for="tpl">Scripting Option :</label>
            <select id="tpl" class="form-select picker ms-2"><option>Template</option></select>
            <input type="checkbox" id="upd" checked><label for="upd">Update Structure</label>
            <a href="#" class="keyinfo d-flex align-items-center ms-auto"><svg class="ico" width="17" height="17"><use href="#i-help"/></svg>Keyword information</a>
          </div>
        </section>
      </div>
    </main>

    <aside class="modlist position-relative flex-shrink-0">
      <h2 class="d-flex justify-content-between align-items-center">ACTIVE MODULES
        <button type="button" class="plain" aria-label="Collapse"><svg class="ico" width="15" height="15"><use href="#i-go"/></svg></button></h2>
      <a href="#" class="entry on">
        <div class="name d-flex align-items-center"><span class="bars"></span>Structure Builder</div>
        <div class="sub">Structure Builder</div>
        <hr>
      </a>
      <a href="#" class="entry off">
        <div class="name d-flex align-items-center"><span class="bars"></span>Quantum Espresso</div>
        <div class="sub">Quantum Espresso</div>
        <span class="chip">pw.x</span>
        <hr>
      </a>
      <svg class="pointer" width="36" height="45" viewBox="0 0 36 45"><path d="M10 3q2-3 5 0v12l1-3h4l1 3h4l1 3h5l2 3v10l-4 8v4H11v-4L2 24v-4h5l3 4z" fill="#fff" stroke="#222" stroke-width="2"/><path d="M15 13v7M21 15v6M27 18v5" stroke="#222" stroke-width="2"/></svg>
    </aside>
  </div>

  <footer class="bottombar d-flex align-items-center">
    <span class="importer d-flex align-items-center">Import Module <svg class="ico" width="17" height="17"><use href="#i-go"/></svg></span>
    <div class="launch d-flex">
      <button type="button" class="btn btn-act">Structure Builder</button>
      <div class="dropup"><button type="button" class="btn btn-act dropdown-toggle" data-bs-toggle="dropdown">Simulation</button></div>
      <div class="dropup"><button type="button" class="btn btn-act dropdown-toggle" data-bs-toggle="dropdown">Analyzer</button></div>
      <div class="dropup"><button type="button" class="btn btn-act dropdown-toggle" data-bs-toggle="dropdown">Etc.</button></div>
    </div>
    <div class="savebox d-flex align-items-center ms-auto">
      <label for="work" class="me-2">Last save : None</label>
      <input id="work" type="text" value="New Work">
      <button type="button" class="btn btn-save">Save</button>
      <div class="dropup ms-1"><button type="button" class="btn btn-act btn-gear dropdown-toggle d-flex align-items-center" data-bs-toggle="dropdown" aria-label="Settings"><svg class="ico" width="18" height="18" viewBox="0 0 512 512"><path d="M487.400 315.700l-42.600-24.600c4.300-23.200 4.300-47 0-70.200l42.600-24.600c4.900-2.800 7.100-8.600 5.500-14-11.100-35.600-30-67.800-54.700-94.600-3.800-4.100-10-5.100-14.800-2.300L380.800 110c-17.900-15.400-38.500-27.300-60.800-35.100V25.800c0-5.600-3.900-10.500-9.400-11.700-36.700-8.200-74.300-7.800-109.200 0-5.500 1.200-9.400 6.100-9.400 11.700V75c-22.200 7.900-42.800 19.800-60.800 35.100L88.700 85.500c-4.900-2.800-11-1.900-14.800 2.300-24.700 26.700-43.600 58.900-54.700 94.600-1.700 5.400.6 11.200 5.500 14L67.300 221c-4.300 23.200-4.300 47 0 70.200l-42.600 24.600c-4.900 2.800-7.100 8.600-5.500 14 11.100 35.600 30 67.800 54.700 94.600 3.800 4.100 10 5.100 14.800 2.300l42.600-24.600c17.900 15.400 38.500 27.300 60.800 35.100v49.200c0 5.600 3.900 10.500 9.400 11.700 36.700 8.200 74.300 7.800 109.200 0 5.500-1.200 9.400-6.100 9.400-11.700v-49.200c22.200-7.900 42.800-19.800 60.800-35.100l42.600 24.600c4.900 2.800 11 1.900 14.800-2.300 24.700-26.700 43.600-58.900 54.700-94.600 1.500-5.500-.7-11.300-5.600-14.100zM256 336c-44.100 0-80-35.900-80-80s35.900-80 80-80 80 35.900 80 80-35.900 80-80 80z"/></svg></button></div>
    </div>
    <button type="button" class="chat" aria-label="Chat"><svg width="40" height="40" viewBox="0 0 40 40"><path d="M20 1c11 0 19 8 19 19 0 6-2 9-2 13l1 5c-4 1-6-1-8-1-3 1-6 2-10 2C9 39 1 31 1 20S9 1 20 1z" fill="#fff"/><rect x="11.500" y="16" width="5" height="8" rx="2.500" fill="#5560ff"/><rect x="23.500" y="16" width="5" height="8" rx="2.500" fill="#5560ff"/></svg></button>
  </footer>
</div>

<div class="rail d-flex flex-column align-items-center flex-shrink-0" aria-hidden="true">
  <svg width="17" height="18" viewBox="0 0 17 18"><path d="M4.500 11.500h8l-4-4z" fill="#a3a3a3"/></svg>
  <div class="thumb"></div>
  <svg class="mt-auto" width="17" height="17" viewBox="0 0 17 17"><path d="M4.500 6.500h8l-4 4z" fill="#505050"/></svg>
  <div class="grip"></div>
</div>

<div class="message d-flex align-items-start" role="alert">
  <svg class="ico align-self-center" width="26" height="26"><use href="#i-info"/></svg>
  <div class="copy flex-grow-1"><strong>Connecting modules</strong>There is 1 available module to connect.<br>Click the desired module at the navigation bar.</div>
  <button type="button" class="plain" aria-label="Close"><svg class="ico" width="13" height="13"><use href="#i-x"/></svg></button>
</div>
</body>
</html>
